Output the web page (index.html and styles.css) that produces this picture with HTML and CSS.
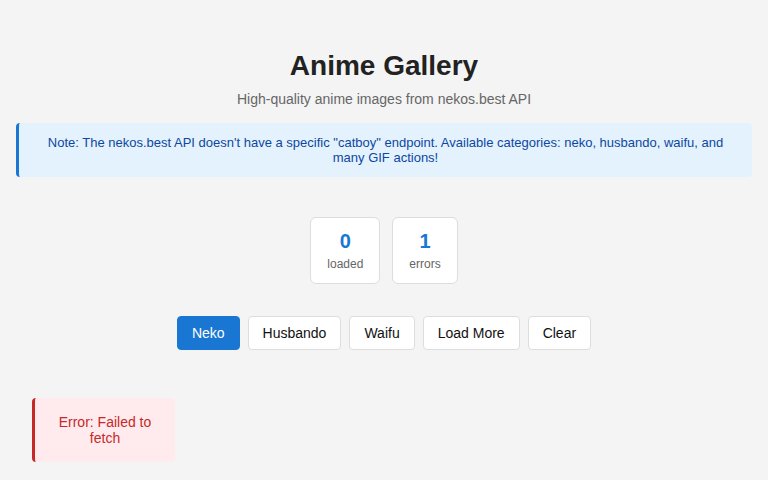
FILE: index.html
```html
<!DOCTYPE html>
<html lang="en">

<head>
    <meta charset="UTF-8">
    <meta name="viewport" content="width=device-width, initial-scale=1.0">
    <title>Anime Gallery</title>
    <link rel="stylesheet" href="styles.css">
</head>

<body>
    <header class="header">
        <h1>Anime Gallery</h1>
        <p class="subtitle">High-quality anime images from nekos.best API</p>
    </header>
    <main>
        <div class="note">
            Note: The nekos.best API doesn't have a specific "catboy" endpoint. Available categories: neko, husbando, waifu, and many GIF actions!
        </div>
        <div class="stats">
            <div class="stat">
                <span class="stat-value" id="loadedCount">0</span>
                <span class="stat-label">loaded</span>
            </div>
            <div class="stat">
                <span class="stat-value" id="errorCount">1</span>
                <span class="stat-label">errors</span>
            </div>
        </div>
        <div class="controls">
            <button class="btn active">Neko</button>
            <button class="btn">Husbando</button>
            <button class="btn">Waifu</button>
            <button class="btn">Load More</button>
            <button class="btn">Clear</button>
        </div>
        <div class="gallery">
            <div class="error">Error: Failed to fetch</div>
        </div>
    </main>
</body>

</html>
```

FILE: styles.css
```css
h1,
p,
body {
    margin: 0px;
    padding: 0px;
}

body {
    font-family: 'Liberation Sans', Arial, Helvetica, sans-serif;
    background: #f4f4f4;
    color: #222;
    padding: 0px 16px;
}

.header {
    text-align: center;
    padding-top: 50px;
}

.header h1 {
    font-size: 28px;
    line-height: 32px;
    font-weight: bold;
    color: #222;
}

.subtitle {
    margin-top: 9px;
    font-size: 14px;
    line-height: 16px;
    color: #666;
}

.note {
    margin-top: 16px;
    padding: 12px;
    background: #e3f2fd;
    border-left: 3px solid #1976d2;
    border-radius: 4px;
    color: #0d47a1;
    font-size: 13px;
    line-height: 15px;
    text-align: center;
}

.stats {
    margin-top: 40px;
    display: flex;
    justify-content: center;
    gap: 12px;
}

.stat {
    display: flex;
    flex-direction: column;
    align-items: center;
    gap: 4px;
    padding: 12px 16px;
    background: #fff;
    border: 1px solid #ddd;
    border-radius: 6px;
}

.stat-value {
    font-size: 20px;
    line-height: 23px;
    font-weight: bold;
    color: #1976d2;
}

.stat-label {
    font-size: 12px;
    line-height: 14px;
    color: #666;
}

.controls {
    margin-top: 32px;
    display: flex;
    justify-content: center;
    gap: 8px;
}

.btn {
    font-family: inherit;
    font-size: 14px;
    line-height: 16px;
    padding: 8px 14px;
    background: #fff;
    color: #111;
    border: 1px solid #ddd;
    border-radius: 4px;
}

.btn.active {
    background: #1976d2;
    border-color: #1976d2;
    color: #fff;
}

.gallery {
    margin-top: 48px;
    padding: 0px 16px;
    display: grid;
    grid-template-columns: repeat(auto-fill, 143px);
    gap: 16px;
}

.error {
    padding: 16px 20px;
    background: #ffebee;
    border-left: 3px solid #c62828;
    border-radius: 4px;
    color: #c62828;
    font-size: 14px;
    line-height: 16px;
    text-align: center;
}
```
